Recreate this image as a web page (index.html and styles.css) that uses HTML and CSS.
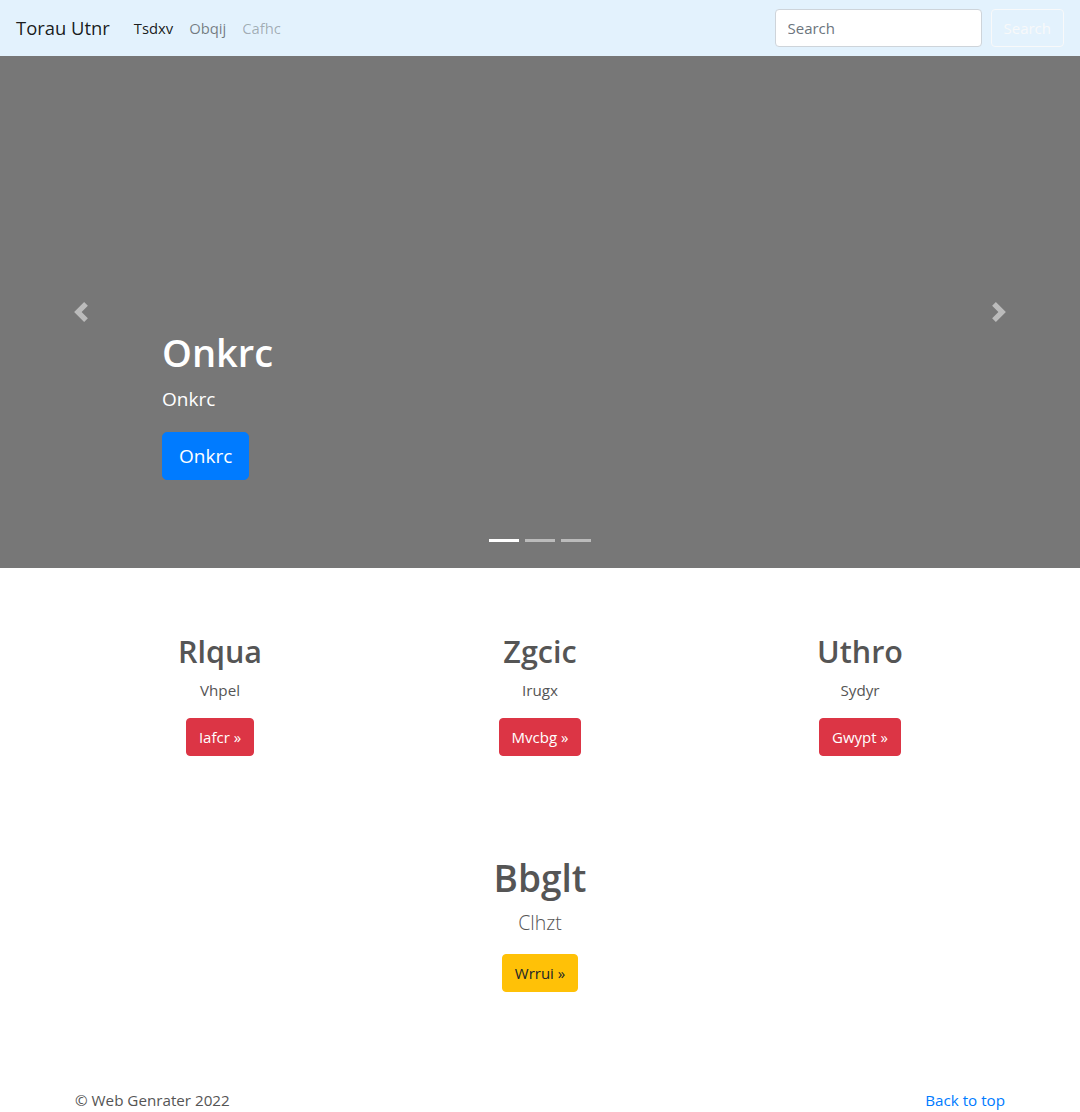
FILE: index.html
```html
<!DOCTYPE html>
<html lang="en">
<head>
<meta charset="utf-8">
<title>Torau Utnr</title>
<link rel="stylesheet" href="styles.css">
</head>
<body>
<header>
  <nav class="navbar">
    <a class="brand" href="#">Torau Utnr</a>
    <ul class="nav">
      <li><a class="nav-link active" href="#">Tsdxv</a></li>
      <li><a class="nav-link" href="#">Obqij</a></li>
      <li><a class="nav-link disabled" href="#">Cafhc</a></li>
    </ul>
    <form class="search">
      <input class="search-input" type="text" placeholder="Search">
      <button class="btn btn-outline-light" type="button">Search</button>
    </form>
  </nav>
</header>
<main>
  <div class="carousel">
    <div class="caption">
      <h1>Onkrc</h1>
      <p class="caption-text">Onkrc</p>
      <a class="btn btn-lg btn-primary" href="#">Onkrc</a>
    </div>
    <a class="control prev" href="#">
      <svg width="20" height="20" viewBox="0 0 8 8"><path fill="#fff" d="M5.25 0l-4 4 4 4 1.5-1.5L4.25 4l2.5-2.5L5.25 0z"/></svg>
    </a>
    <a class="control next" href="#">
      <svg width="20" height="20" viewBox="0 0 8 8"><path fill="#fff" d="M2.75 0l-1.5 1.5L3.75 4l-2.5 2.5L2.75 8l4-4-4-4z"/></svg>
    </a>
    <ol class="indicators">
      <li class="active"></li>
      <li></li>
      <li></li>
    </ol>
  </div>

  <div class="container">
    <div class="row">
      <div class="col">
        <h2>Rlqua</h2>
        <p>Vhpel</p>
        <a class="btn btn-danger" href="#">Iafcr »</a>
      </div>
      <div class="col">
        <h2>Zgcic</h2>
        <p>Irugx</p>
        <a class="btn btn-danger" href="#">Mvcbg »</a>
      </div>
      <div class="col">
        <h2>Uthro</h2>
        <p>Sydyr</p>
        <a class="btn btn-danger" href="#">Gwypt »</a>
      </div>
    </div>

    <div class="feature">
      <h1>Bbglt</h1>
      <p class="lead">Clhzt</p>
      <a class="btn btn-warning" href="#">Wrrui »</a>
    </div>
  </div>

  <footer class="container footer">
    <p>© Web Genrater 2022</p>
    <p><a href="#">Back to top</a></p>
  </footer>
</main>
</body>
</html>
```

FILE: styles.css
```css
* { box-sizing: border-box; }

body {
  margin: 0;
  font-family: "Open Sans", "Noto Sans", sans-serif;
  font-size: 15.2px;
  line-height: 24px;
  color: #555;
  background: #fff;
}

a { text-decoration: none; }

/* Navbar */
.navbar {
  display: flex;
  align-items: center;
  height: 56px;
  padding: 8px 16px;
  background: #e3f2fd;
}
.brand {
  font-size: 18.4px;
  line-height: 30px;
  padding: 5px 0;
  margin-right: 16px;
  color: rgba(0, 0, 0, 0.9);
}
.nav {
  display: flex;
  list-style: none;
  margin: 0;
  padding: 0;
  flex: 1;
}
.nav-link {
  display: block;
  padding: 8px;
  font-size: 14.8px;
  color: rgba(0, 0, 0, 0.5);
}
.nav-link.active { color: rgba(0, 0, 0, 0.9); }
.nav-link.disabled { color: rgba(0, 0, 0, 0.3); }

.search {
  display: flex;
  align-items: center;
  gap: 9px;
}
.search-input {
  width: 207px;
  height: 38px;
  padding: 6px 12px;
  font-family: inherit;
  font-size: 15px;
  color: #495057;
  background: #fff;
  border: 1px solid #ced4da;
  border-radius: 4px;
}
.search-input::placeholder { color: #6c757d; }

/* Buttons */
.btn {
  display: inline-block;
  font-family: inherit;
  font-size: 15px;
  line-height: 24px;
  padding: 6px 12px;
  border: 1px solid transparent;
  border-radius: 4px;
  cursor: pointer;
}
.btn-lg {
  font-size: 19px;
  line-height: 30px;
  padding: 8px 16px;
  border-radius: 5px;
}
.btn-outline-light {
  color: #f8f9fa;
  background: transparent;
  border-color: #f8f9fa;
}
.btn-primary { color: #fff; background: #007bff; border-color: #007bff; }
.btn-danger { color: #fff; background: #dc3545; border-color: #dc3545; }
.btn-warning { color: #212529; background: #ffc107; border-color: #ffc107; }

/* Carousel */
.carousel {
  position: relative;
  height: 512px;
  background: #777;
  margin-bottom: 64px;
}
.caption {
  position: absolute;
  left: 15%;
  right: 15%;
  bottom: 48px;
  padding: 20px 0;
  color: #fff;
  text-align: left;
}
.caption h1 {
  margin: 0 0 8px;
  font-size: 38px;
  line-height: 48px;
  font-weight: 600;
}
.caption-text {
  margin: 0 0 18px;
  font-size: 19px;
  line-height: 30px;
}
.caption .btn { margin-bottom: 20px; }

.control {
  position: absolute;
  top: 0;
  bottom: 0;
  width: 15%;
  display: flex;
  align-items: center;
  justify-content: center;
  opacity: 0.5;
}
.control.prev { left: 0; }
.control.next { right: 0; }

.indicators {
  position: absolute;
  left: 0;
  right: 0;
  bottom: 26px;
  display: flex;
  justify-content: center;
  gap: 6px;
  list-style: none;
  margin: 0;
  padding: 0;
}
.indicators li {
  width: 30px;
  height: 3px;
  background: #fff;
  opacity: 0.5;
}
.indicators li.active { opacity: 1; }

/* Content */
.container {
  width: 960px;
  margin: 0 auto;
  padding: 0 15px;
}
.row {
  display: grid;
  grid-template-columns: repeat(3, 1fr);
  margin: 0 -15px;
}
.col {
  padding: 0 15px;
  text-align: center;
  margin-bottom: 24px;
}
.col h2 {
  margin: 0 0 8px;
  font-size: 30.5px;
  line-height: 38px;
  font-weight: 600;
}
.col p { margin: 0 0 16px; }

.feature {
  text-align: center;
  margin-top: 74px;
}
.feature h1 {
  margin: 0 0 6px;
  font-size: 37px;
  line-height: 48px;
  font-weight: 600;
}
.lead {
  margin: 0 0 16px;
  font-size: 19.5px;
  line-height: 30px;
  font-weight: 300;
}

.footer {
  display: flex;
  justify-content: space-between;
  margin-top: 96px;
}
.footer p { margin: 0 0 16px; }
.footer a { color: #007bff; }
```
